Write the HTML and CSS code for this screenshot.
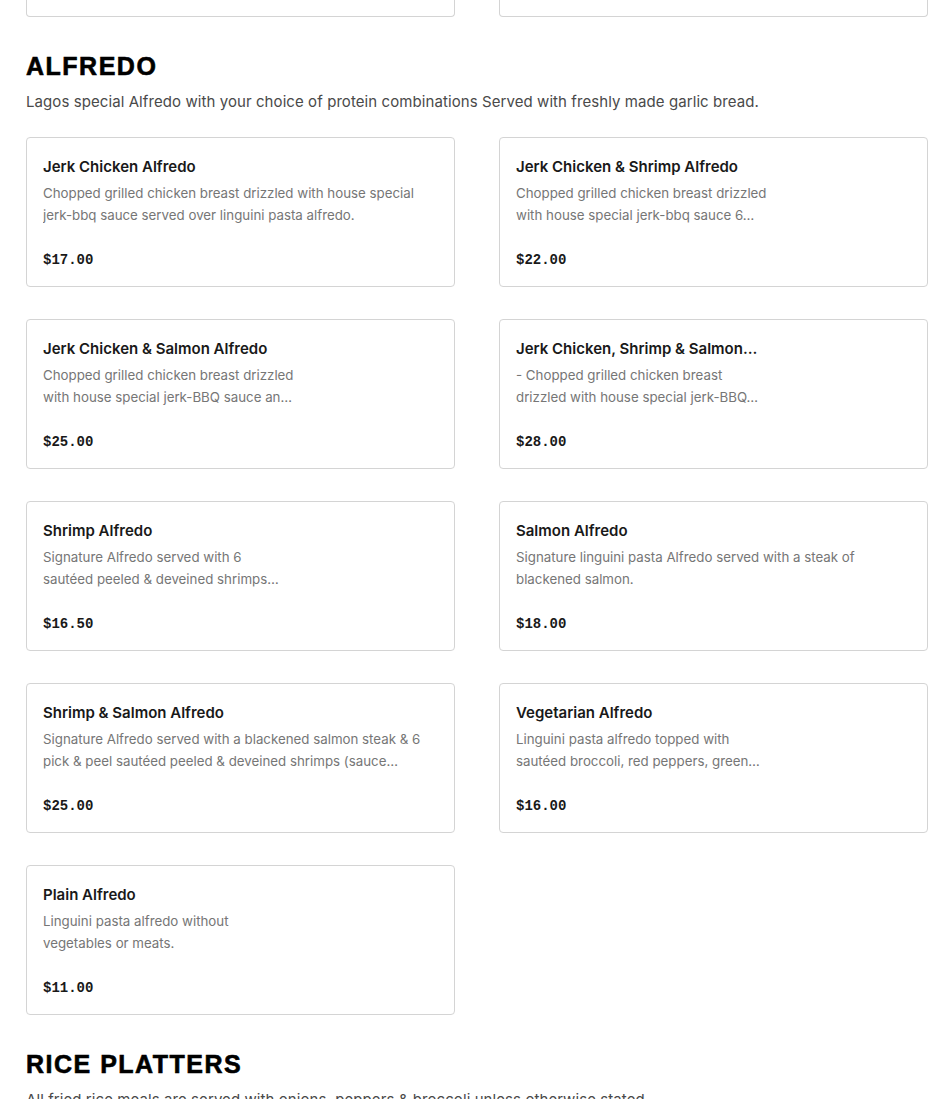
FILE: index.html
```html
<!DOCTYPE html>
<html lang="en">
<head>
<meta charset="utf-8">
<title>Menu</title>
<link rel="stylesheet" href="styles.css">
</head>
<body>
<div class="page">
  <div class="grid prev">
    <div class="card stub"></div>
    <div class="card stub"></div>
  </div>

  <section class="section">
    <h2 class="section-title">ALFREDO</h2>
    <p class="section-desc">Lagos special Alfredo with your choice of protein combinations Served with freshly made garlic bread.</p>
    <div class="grid">
      <div class="card">
        <h3 class="item-name">Jerk Chicken Alfredo</h3>
        <p class="item-desc">Chopped grilled chicken breast drizzled with house special jerk-bbq sauce served over linguini pasta alfredo.</p>
        <div class="price">$17.00</div>
      </div>
      <div class="card">
        <h3 class="item-name">Jerk Chicken &amp; Shrimp Alfredo</h3>
        <p class="item-desc narrow">Chopped grilled chicken breast drizzled with house special jerk-bbq sauce 6…</p>
        <div class="price">$22.00</div>
      </div>
      <div class="card">
        <h3 class="item-name">Jerk Chicken &amp; Salmon Alfredo</h3>
        <p class="item-desc narrow">Chopped grilled chicken breast drizzled with house special jerk-BBQ sauce an…</p>
        <div class="price">$25.00</div>
      </div>
      <div class="card">
        <h3 class="item-name narrow-title">Jerk Chicken, Shrimp &amp; Salmon…</h3>
        <p class="item-desc narrow">- Chopped grilled chicken breast drizzled with house special jerk-BBQ…</p>
        <div class="price">$28.00</div>
      </div>
      <div class="card">
        <h3 class="item-name">Shrimp Alfredo</h3>
        <p class="item-desc narrower">Signature Alfredo served with 6 sautéed peeled &amp; deveined shrimps…</p>
        <div class="price">$16.50</div>
      </div>
      <div class="card">
        <h3 class="item-name">Salmon Alfredo</h3>
        <p class="item-desc">Signature linguini pasta Alfredo served with a steak of blackened salmon.</p>
        <div class="price">$18.00</div>
      </div>
      <div class="card">
        <h3 class="item-name">Shrimp &amp; Salmon Alfredo</h3>
        <p class="item-desc">Signature Alfredo served with a blackened salmon steak &amp; 6 pick &amp; peel sautéed peeled &amp; deveined shrimps (sauce…</p>
        <div class="price">$25.00</div>
      </div>
      <div class="card">
        <h3 class="item-name">Vegetarian Alfredo</h3>
        <p class="item-desc narrow">Linguini pasta alfredo topped with sautéed broccoli, red peppers, green…</p>
        <div class="price">$16.00</div>
      </div>
      <div class="card">
        <h3 class="item-name">Plain Alfredo</h3>
        <p class="item-desc narrow">Linguini pasta alfredo without vegetables or meats.</p>
        <div class="price">$11.00</div>
      </div>
    </div>
  </section>

  <section class="section">
    <h2 class="section-title">RICE PLATTERS</h2>
    <p class="section-desc">All fried rice meals are served with onions, peppers &amp; broccoli unless otherwise stated.</p>
  </section>
</div>
</body>
</html>
```

FILE: styles.css
```css
* { box-sizing: border-box; }
html, body { margin: 0; padding: 0; background: #fff; }
body {
  font-family: Inter, "Noto Sans", "Liberation Sans", sans-serif;
  color: #191919;
}
.page {
  width: 902px;
  margin-left: 26px;
}
.grid {
  display: grid;
  grid-template-columns: 429px 429px;
  column-gap: 44px;
  row-gap: 32px;
}
.card {
  border: 1px solid #d4d4d4;
  border-radius: 4px;
  padding: 18px 16px 15px;
  background: #fff;
  min-width: 0;
}
.card.stub {
  height: 17px;
  border-top: none;
  border-top-left-radius: 0;
  border-top-right-radius: 0;
  padding: 0;
}
.section-title {
  margin: 31px 0 0;
  font-family: "Liberation Sans", Arial, sans-serif;
  font-weight: 900;
  font-size: 25px;
  line-height: 36px;
  color: #000;
  letter-spacing: 1.5px;
  -webkit-text-stroke: 0.6px #000;
}
.section-desc {
  margin: 7px 0 24px;
  font-size: 15px;
  line-height: 22px;
  color: #4a4a4a;
  letter-spacing: 0.08px;
}
.item-name {
  margin: 0;
  font-size: 15px;
  line-height: 22px;
  font-weight: 600;
  color: #191919;
  white-space: nowrap;
  overflow: hidden;
  text-overflow: ellipsis;
}
.narrow-title { max-width: 260px; }
.item-desc {
  margin: 4px 0 0;
  font-size: 13.3px;
  line-height: 22px;
  color: #767676;
  height: 44px;
  overflow: hidden;
}
.item-desc.narrow { max-width: 253px; }
.item-desc.narrower { max-width: 240px; }
.price {
  margin-top: 23px;
  font-family: "Liberation Mono", "DejaVu Sans Mono", monospace;
  font-weight: 700;
  font-size: 14px;
  line-height: 22px;
  color: #191919;
}
```
